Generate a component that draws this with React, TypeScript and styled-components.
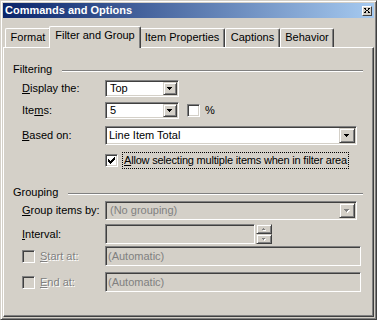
import React from 'react'
import styled, { createGlobalStyle } from 'styled-components'

const face = '#d4d0c8'
const shadow = '#808080'
const dark = '#404040'

const GlobalStyle = createGlobalStyle`
  html, body {
    margin: 0;
    background: ${face};
  }
`

const Window = styled.div`
  box-sizing: border-box;
  width: 377px;
  height: 320px;
  display: flex;
  flex-direction: column;
  background: ${face};
  border: 1px solid;
  border-color: ${face} ${dark} ${dark} ${face};
  box-shadow: inset 1px 1px #fff, inset -1px -1px ${shadow};
  padding: 2px;
  font-family: "Liberation Sans", Arial, sans-serif;
  font-size: 11px;
  line-height: 13px;
  color: #000;
`

const TitleBar = styled.div`
  height: 15px;
  display: flex;
  align-items: center;
  justify-content: space-between;
  padding: 0 2px;
  background: linear-gradient(to right, #0a246a, #a6caf0);
  color: #fff;
  font-weight: bold;
`

const CloseButton = styled.div`
  box-sizing: border-box;
  width: 10px;
  height: 10px;
  display: flex;
  align-items: center;
  justify-content: center;
  background: ${face};
  border: 1px solid;
  border-color: #fff ${dark} ${dark} #fff;
`

const TabStrip = styled.div`
  height: 21px;
  margin-top: 8px;
  padding-left: 2px;
  display: flex;
  align-items: flex-end;
`

const Tab = styled.div<{ $width: number; $active?: boolean }>`
  box-sizing: border-box;
  position: relative;
  width: ${(p) => p.$width + (p.$active ? 4 : 0)}px;
  height: ${(p) => (p.$active ? 22 : 19)}px;
  margin: ${(p) => (p.$active ? '0 -2px -1px' : '0')};
  z-index: ${(p) => (p.$active ? 1 : 0)};
  padding-top: 2px;
  text-align: center;
  white-space: nowrap;
  background: ${face};
  border-top: 1px solid #fff;
  border-left: 1px solid #fff;
  border-right: 1px solid ${dark};
  border-radius: 2px 2px 0 0;
  box-shadow: inset -1px 0 ${shadow};
`

const Panel = styled.div`
  flex: 1;
  display: flex;
  flex-direction: column;
  border-top: 1px solid #fff;
  border-left: 1px solid #fff;
  border-right: 1px solid ${dark};
  border-bottom: 1px solid ${dark};
  box-shadow: inset -1px -1px ${shadow};
  padding: 15px 10px 0 9px;
`

const SectionHead = styled.div<{ $gap: number }>`
  display: flex;
  align-items: center;
  height: 13px;
  margin-top: ${(p) => p.$gap}px;
`

const SectionRule = styled.div`
  flex: 1;
  margin: 2px 0 0 10px;
  border-top: 1px solid ${shadow};
  border-bottom: 1px solid #fff;
`

const Row = styled.div<{ $gap: number; $h: number }>`
  display: flex;
  align-items: center;
  height: ${(p) => p.$h}px;
  margin-top: ${(p) => p.$gap}px;
  padding-left: 9px;
`

const Label = styled.span<{ $disabled?: boolean }>`
  flex: none;
  width: 83px;
  display: flex;
  align-items: center;
  gap: 5px;
  color: ${(p) => (p.$disabled ? shadow : '#000')};
  text-shadow: ${(p) => (p.$disabled ? '1px 1px 0 #fff' : 'none')};
`

const Field = styled.div<{ $w: number; $disabled?: boolean }>`
  box-sizing: border-box;
  flex: none;
  width: ${(p) => p.$w}px;
  height: 100%;
  display: flex;
  align-items: stretch;
  padding: 1px;
  background: ${(p) => (p.$disabled ? face : '#fff')};
  border: 1px solid;
  border-color: ${shadow} #fff #fff ${shadow};
  box-shadow: inset 1px 1px ${dark}, inset -1px -1px ${face};
`

const FieldText = styled.span<{ $disabled?: boolean; $indent?: number }>`
  flex: 1;
  display: flex;
  align-items: center;
  padding-left: ${(p) => p.$indent ?? 3}px;
  color: ${(p) => (p.$disabled ? shadow : '#000')};
  white-space: nowrap;
`

const RaisedButton = styled.div<{ $w: number }>`
  box-sizing: border-box;
  flex: none;
  width: ${(p) => p.$w}px;
  display: flex;
  align-items: center;
  justify-content: center;
  background: ${face};
  border: 1px solid;
  border-color: ${face} ${dark} ${dark} ${face};
  box-shadow: inset 1px 1px #fff, inset -1px -1px ${shadow};
`

const SpinColumn = styled.div`
  display: flex;
  flex-direction: column;
  height: 100%;
  margin-left: 1px;

  > div {
    flex: 1;
  }
`

const CheckBox = styled.span<{ $disabled?: boolean }>`
  box-sizing: border-box;
  flex: none;
  width: 13px;
  height: 13px;
  display: flex;
  align-items: center;
  justify-content: center;
  background: ${(p) => (p.$disabled ? face : '#fff')};
  border: 1px solid;
  border-color: ${shadow} #fff #fff ${shadow};
  box-shadow: inset 1px 1px ${dark}, inset -1px -1px ${face};
`

const FocusLabel = styled.span`
  margin-left: 4px;
  padding: 1px;
  border: 1px dotted #000;
  white-space: nowrap;
  letter-spacing: -0.2px;
`

const Percent = styled.span`
  margin-left: 5px;
`

const Arrow = ({ up, disabled }: { up?: boolean; disabled?: boolean }) => {
  const d = up
    ? 'M2 0h1v1h1v1h1v1h-5v-1h1v-1h1z'
    : 'M0 0h5v1h-1v1h-1v1h-1v-1h-1v-1h-1z'
  return (
    <svg width="6" height="4" viewBox="0 0 6 4" shapeRendering="crispEdges">
      {disabled && <path d={d} fill="#fff" transform="translate(1 1)" />}
      <path d={d} fill={disabled ? shadow : '#000'} />
    </svg>
  )
}

const SmallArrow = ({ up }: { up?: boolean }) => {
  const d = up ? 'M1 0h1v1h1v1h-3v-1h1z' : 'M0 0h3v1h-1v1h-1v-1h-1z'
  return (
    <svg width="4" height="3" viewBox="0 0 4 3" shapeRendering="crispEdges">
      <path d={d} fill="#fff" transform="translate(1 1)" />
      <path d={d} fill={shadow} />
    </svg>
  )
}

const Check = () => (
  <svg width="7" height="7" viewBox="0 0 7 7" shapeRendering="crispEdges">
    <path
      d="M0 2h1v3h-1z M1 3h1v3h-1z M2 4h1v3h-1z M3 3h1v3h-1z M4 2h1v3h-1z M5 1h1v3h-1z M6 0h1v3h-1z"
      fill="#000"
    />
  </svg>
)

const Combo = ({ w, text, disabled }: { w: number; text: string; disabled?: boolean }) => (
  <Field $w={w} $disabled={disabled}>
    <FieldText $disabled={disabled}>{text}</FieldText>
    <RaisedButton $w={disabled ? 16 : 14}>
      <Arrow disabled={disabled} />
    </RaisedButton>
  </Field>
)

export default function App() {
  return (
    <>
      <GlobalStyle />
      <Window>
        <TitleBar>
          <span>Commands and Options</span>
          <CloseButton>
            <svg width="6" height="5" viewBox="0 0 6 5" shapeRendering="crispEdges">
              <path
                d="M0 0h2v1h-2z M4 0h2v1h-2z M1 1h1v1h-1z M4 1h1v1h-1z M2 2h2v1h-2z M1 3h1v1h-1z M4 3h1v1h-1z M0 4h2v1h-2z M4 4h2v1h-2z"
                fill="#000"
              />
            </svg>
          </CloseButton>
        </TitleBar>

        <TabStrip>
          <Tab $width={46}>Format</Tab>
          <Tab $width={88} $active>Filter and Group</Tab>
          <Tab $width={86}>Item Properties</Tab>
          <Tab $width={55}>Captions</Tab>
          <Tab $width={54}>Behavior</Tab>
        </TabStrip>

        <Panel>
          <SectionHead $gap={0}>
            Filtering
            <SectionRule />
          </SectionHead>

          <Row $gap={4} $h={17}>
            <Label><span><u>D</u>isplay the:</span></Label>
            <Combo w={74} text="Top" />
          </Row>

          <Row $gap={5} $h={17}>
            <Label><span>Ite<u>m</u>s:</span></Label>
            <Combo w={74} text="5" />
            <CheckBox style={{ marginLeft: 8 }} />
            <Percent>%</Percent>
          </Row>

          <Row $gap={7} $h={19}>
            <Label><span><u>B</u>ased on:</span></Label>
            <Field $w={252}>
              <FieldText $indent={2}>Line Item Total</FieldText>
              <RaisedButton $w={16}>
                <Arrow />
              </RaisedButton>
            </Field>
          </Row>

          <Row $gap={7} $h={17}>
            <Label />
            <CheckBox>
              <Check />
            </CheckBox>
            <FocusLabel><u>A</u>llow selecting multiple items when in filter area</FocusLabel>
          </Row>

          <SectionHead $gap={17}>
            Grouping
            <SectionRule />
          </SectionHead>

          <Row $gap={2} $h={19}>
            <Label><span><u>G</u>roup items by:</span></Label>
            <Combo w={252} text="(No grouping)" disabled />
          </Row>

          <Row $gap={4} $h={20}>
            <Label><span><u>I</u>nterval:</span></Label>
            <Field $w={150} $disabled />
            <SpinColumn>
              <RaisedButton $w={16}>
                <SmallArrow up />
              </RaisedButton>
              <RaisedButton $w={16}>
                <SmallArrow />
              </RaisedButton>
            </SpinColumn>
          </Row>

          <Row $gap={2} $h={20}>
            <Label $disabled>
              <CheckBox $disabled />
              <span><u>S</u>tart at:</span>
            </Label>
            <Field $w={256} $disabled>
              <FieldText $disabled $indent={1}>(Automatic)</FieldText>
            </Field>
          </Row>

          <Row $gap={6} $h={20}>
            <Label $disabled>
              <CheckBox $disabled />
              <span><u>E</u>nd at:</span>
            </Label>
            <Field $w={256} $disabled>
              <FieldText $disabled $indent={1}>(Automatic)</FieldText>
            </Field>
          </Row>
        </Panel>
      </Window>
    </>
  )
}
